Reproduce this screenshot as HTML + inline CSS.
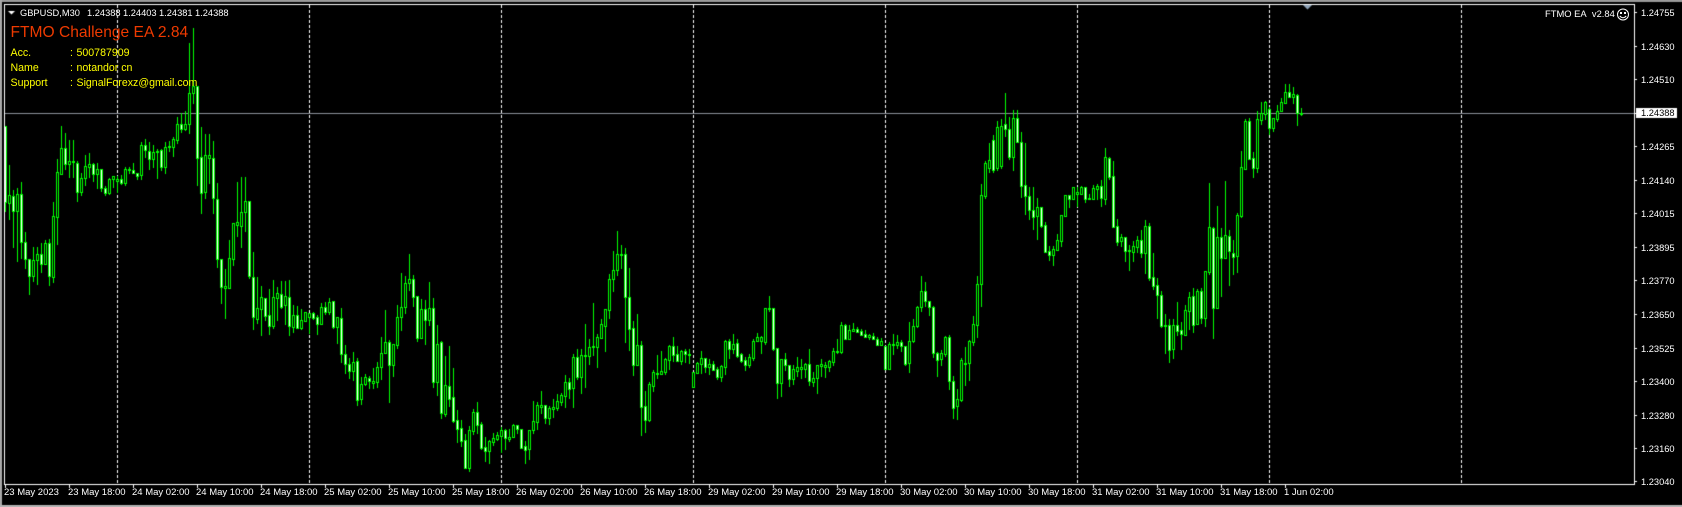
<!DOCTYPE html>
<html><head><meta charset="utf-8"><title>GBPUSD,M30</title>
<style>
html,body{margin:0;padding:0;background:#000;width:1682px;height:507px;overflow:hidden}
#c{position:absolute;left:0;top:0}
.t{position:absolute;white-space:pre;font-family:"Liberation Sans",sans-serif;font-size:9.3px;line-height:12px;height:12px;color:#fff}
.y{color:#ffff00;font-size:10.6px}
.p{left:1641px}
.a{top:487px;font-size:9.5px}
</style></head><body>
<canvas id="c" width="1682" height="507"></canvas>
<div class="t" style="left:20px;top:7px">GBPUSD,M30</div>
<div class="t" style="left:87px;top:7px">1.24388</div>
<div class="t" style="left:123px;top:7px">1.24403</div>
<div class="t" style="left:159px;top:7px">1.24381</div>
<div class="t" style="left:195px;top:7px">1.24388</div>
<div class="t" style="left:10.5px;top:24px;height:18px;line-height:18px;font-size:15.6px;color:#ee3a00">FTMO Challenge EA 2.84</div>
<div class="t y" style="left:10.5px;top:47px">Acc.</div><div class="t y" style="left:70px;top:47px">:</div><div class="t y" style="left:76.5px;top:47px">500787909</div>
<div class="t y" style="left:10.5px;top:62px">Name</div><div class="t y" style="left:70px;top:62px">:</div><div class="t y" style="left:76.5px;top:62px">notandor cn</div>
<div class="t y" style="left:10.5px;top:77px">Support</div><div class="t y" style="left:70px;top:77px">:</div><div class="t y" style="left:76.5px;top:77px">SignalForexz@gmail.com</div>
<div class="t" style="left:1545px;top:8px;font-size:9.4px">FTMO EA&nbsp; v2.84</div>
<svg style="position:absolute;left:1616px;top:8px" width="14" height="14" viewBox="0 0 14 14"><circle cx="7" cy="6.5" r="5.5" fill="none" stroke="#fff" stroke-width="1"/><rect x="4" y="4" width="2" height="2" fill="#fff"/><rect x="8" y="4" width="2" height="2" fill="#fff"/><path d="M3.8 8 Q7 11.5 10.2 8" fill="none" stroke="#fff" stroke-width="1"/></svg>
<div class="t p" style="top:7px">1.24755</div>
<div class="t p" style="top:41px">1.24630</div>
<div class="t p" style="top:74px">1.24510</div>
<div class="t p" style="top:107px;color:#000">1.24388</div>
<div class="t p" style="top:141px">1.24265</div>
<div class="t p" style="top:175px">1.24140</div>
<div class="t p" style="top:208px">1.24015</div>
<div class="t p" style="top:242px">1.23895</div>
<div class="t p" style="top:275px">1.23770</div>
<div class="t p" style="top:309px">1.23650</div>
<div class="t p" style="top:343px">1.23525</div>
<div class="t p" style="top:376px">1.23400</div>
<div class="t p" style="top:410px">1.23280</div>
<div class="t p" style="top:443px">1.23160</div>
<div class="t p" style="top:476px">1.23040</div>
<div class="t a" style="left:4px">23 May 2023</div>
<div class="t a" style="left:68px">23 May 18:00</div>
<div class="t a" style="left:132px">24 May 02:00</div>
<div class="t a" style="left:196px">24 May 10:00</div>
<div class="t a" style="left:260px">24 May 18:00</div>
<div class="t a" style="left:324px">25 May 02:00</div>
<div class="t a" style="left:388px">25 May 10:00</div>
<div class="t a" style="left:452px">25 May 18:00</div>
<div class="t a" style="left:516px">26 May 02:00</div>
<div class="t a" style="left:580px">26 May 10:00</div>
<div class="t a" style="left:644px">26 May 18:00</div>
<div class="t a" style="left:708px">29 May 02:00</div>
<div class="t a" style="left:772px">29 May 10:00</div>
<div class="t a" style="left:836px">29 May 18:00</div>
<div class="t a" style="left:900px">30 May 02:00</div>
<div class="t a" style="left:964px">30 May 10:00</div>
<div class="t a" style="left:1028px">30 May 18:00</div>
<div class="t a" style="left:1092px">31 May 02:00</div>
<div class="t a" style="left:1156px">31 May 10:00</div>
<div class="t a" style="left:1220px">31 May 18:00</div>
<div class="t a" style="left:1284px">1 Jun 02:00</div>
<script>
var D=[[126,126,202,211,1],[165,195,203,219,0],[190,196,211,247,1],[188,194,211,261,0],[182,194,242,258,1],[232,242,259,268,1],[259,259,276,294,1],[247,260,276,281,0],[247,254,260,284,0],[243,254,264,272,1],[240,243,264,264,0],[239,243,276,285,1],[202,216,277,282,0],[159,172,217,244,0],[126,148,174,174,0],[133,148,164,169,1],[140,161,164,177,0],[140,161,162,177,0],[161,163,192,201,1],[173,178,192,195,0],[155,166,178,185,0],[153,164,167,177,0],[163,164,174,181,1],[163,169,174,188,0],[169,169,188,191,1],[186,188,193,195,1],[178,179,193,194,0],[176,176,179,187,0],[176,179,181,192,0],[175,179,183,184,1],[167,169,183,185,0],[167,169,170,173,0],[163,170,173,173,1],[173,173,176,179,1],[142,145,175,179,0],[139,145,150,157,1],[142,151,159,169,1],[145,152,159,167,0],[149,151,152,178,0],[149,150,167,170,1],[142,147,167,173,0],[141,146,147,151,0],[137,139,147,156,0],[117,124,140,143,0],[113,124,129,132,1],[111,124,129,130,0],[43,93,124,133,0],[28,86,93,103,0],[86,86,158,185,1],[127,157,193,213,1],[134,155,192,198,0],[134,155,158,183,0],[141,158,198,213,1],[183,199,259,267,1],[259,259,287,303,1],[269,286,288,318,0],[240,258,288,288,0],[223,223,259,265,0],[182,222,225,236,0],[177,212,226,247,0],[177,201,212,231,0],[201,201,276,278,1],[252,277,317,329,1],[277,308,319,323,0],[286,297,309,335,0],[298,298,316,320,1],[289,315,326,334,1],[280,297,326,328,0],[287,293,298,320,0],[281,294,307,308,1],[281,296,305,324,0],[280,297,326,335,1],[305,315,327,332,0],[306,315,328,328,1],[309,320,328,329,0],[312,312,321,321,0],[313,313,317,333,0],[312,313,318,319,1],[315,317,324,334,1],[303,307,324,324,0],[302,307,312,314,1],[298,302,312,314,0],[301,301,327,328,1],[317,317,327,343,0],[308,318,354,362,1],[345,354,364,373,1],[358,364,371,378,1],[352,362,371,380,0],[358,361,400,405,1],[377,384,399,404,0],[374,377,384,385,0],[376,378,381,388,1],[368,381,383,388,0],[362,367,382,387,0],[337,353,367,379,0],[310,342,353,353,0],[340,342,365,402,1],[344,344,365,376,0],[305,317,345,348,0],[273,307,317,330,0],[276,283,307,313,0],[254,279,283,290,0],[275,279,297,306,1],[296,296,338,341,1],[299,309,338,338,0],[300,309,320,344,1],[282,308,320,325,0],[298,308,382,387,1],[325,344,382,395,0],[341,342,413,418,1],[356,385,414,416,0],[346,386,399,406,1],[368,397,421,422,1],[410,420,429,442,1],[420,428,441,446,1],[434,440,468,468,1],[426,430,468,471,0],[409,412,431,434,0],[402,412,425,433,1],[422,424,448,449,1],[437,447,451,461,1],[440,441,451,463,0],[433,438,442,445,0],[432,435,439,440,0],[427,430,436,452,0],[429,430,438,449,1],[429,437,439,441,0],[424,425,437,437,0],[425,425,429,433,1],[429,429,448,448,1],[441,446,450,463,1],[430,430,449,459,0],[401,421,430,433,0],[402,405,422,429,0],[391,405,407,413,0],[405,405,418,423,1],[406,408,418,424,0],[399,407,409,417,0],[394,401,408,410,0],[393,395,402,405,0],[375,382,396,407,0],[378,382,389,398,1],[354,357,388,407,0],[349,357,377,379,1],[349,355,377,393,0],[324,355,356,387,0],[339,347,356,364,0],[303,346,347,355,0],[334,337,347,367,0],[319,324,338,338,0],[309,309,326,351,0],[274,279,310,318,0],[251,270,279,291,0],[231,254,270,275,0],[245,254,255,268,0],[248,254,297,342,1],[268,297,329,350,1],[321,328,365,375,1],[314,345,365,365,0],[341,345,407,435,1],[391,406,420,432,1],[382,384,420,421,0],[370,372,386,391,0],[355,373,374,378,0],[351,371,374,374,0],[358,359,372,374,0],[345,346,360,369,0],[337,346,355,361,1],[346,354,361,361,1],[350,351,361,364,0],[349,351,354,362,1],[349,354,355,363,0],[372,372,387,387,0],[362,363,373,373,0],[351,358,364,373,0],[358,358,367,372,1],[359,364,367,374,0],[361,364,370,370,1],[367,369,377,379,1],[365,366,377,381,0],[340,341,367,374,0],[339,341,349,358,1],[334,344,349,353,0],[339,343,356,357,1],[353,354,361,362,1],[357,360,365,370,1],[354,357,365,367,0],[339,341,358,360,0],[333,337,341,341,0],[336,337,341,353,0],[308,308,342,344,0],[296,308,309,311,0],[308,308,349,350,1],[348,348,383,398,1],[359,359,383,396,0],[353,359,365,370,1],[365,365,379,386,1],[365,369,379,384,0],[357,367,371,376,0],[359,367,369,378,0],[363,364,369,377,0],[349,364,381,385,1],[372,378,382,386,0],[365,365,378,393,0],[359,364,366,376,0],[362,365,367,377,0],[360,361,367,371,0],[348,351,362,365,0],[339,351,352,353,0],[322,325,352,353,0],[324,325,339,339,1],[325,330,339,339,0],[323,329,331,331,0],[327,329,332,332,1],[329,331,335,335,1],[330,334,337,337,1],[334,335,337,339,0],[333,336,339,339,1],[337,339,345,345,1],[338,341,345,345,0],[346,346,369,369,1],[342,344,369,369,0],[334,344,345,354,0],[335,342,345,348,0],[340,342,346,351,1],[346,346,364,365,1],[322,341,363,372,0],[319,326,341,342,0],[306,307,326,327,0],[276,291,307,311,0],[282,291,301,306,1],[301,301,307,315,1],[306,307,353,357,1],[352,353,360,376,1],[350,353,359,365,0],[336,337,354,356,0],[335,337,381,389,1],[376,381,408,418,1],[389,399,406,419,0],[358,360,400,401,0],[347,363,364,385,0],[340,341,363,380,0],[316,324,342,345,0],[276,284,325,337,0],[184,195,284,306,0],[161,163,196,198,0],[143,160,168,172,0],[135,140,170,172,1],[121,127,168,170,0],[119,126,166,168,0],[93,124,129,136,1],[117,129,157,159,1],[110,118,157,170,0],[110,118,142,142,1],[132,142,186,197,1],[143,185,196,214,1],[187,196,210,219,1],[187,210,217,229,1],[198,207,216,239,0],[207,207,226,227,1],[222,225,252,252,1],[246,251,255,260,1],[246,249,255,265,0],[234,240,250,250,0],[215,215,241,246,0],[195,195,216,216,0],[195,195,199,207,1],[187,187,199,199,0],[187,192,194,206,0],[186,187,194,194,0],[187,187,199,202,1],[194,198,199,199,0],[185,188,199,199,0],[184,186,189,199,0],[180,186,198,206,1],[148,157,199,204,0],[157,158,177,179,1],[161,176,227,227,1],[219,226,242,245,1],[234,237,241,246,0],[237,237,251,261,1],[245,250,251,270,0],[241,246,252,261,0],[236,240,247,252,0],[230,240,253,257,1],[220,226,253,273,0],[223,226,278,280,1],[253,277,286,289,1],[278,285,295,318,1],[291,295,326,327,1],[314,325,326,353,0],[319,325,350,362,1],[319,325,349,358,0],[302,325,331,335,1],[322,330,334,349,1],[305,310,335,335,0],[292,297,311,329,0],[288,296,325,332,1],[289,291,324,324,0],[288,291,318,323,1],[271,271,318,326,0],[183,227,272,274,0],[227,228,308,338,1],[206,237,308,308,0],[228,237,258,296,1],[181,235,258,258,0],[230,236,251,285,1],[240,253,257,274,1],[213,215,256,272,0],[151,167,216,217,0],[119,121,169,169,0],[118,121,159,159,1],[152,158,168,177,1],[111,119,168,172,0],[102,113,120,124,0],[101,102,114,119,0],[107,109,128,134,1],[118,118,128,131,0],[105,111,119,121,0],[98,102,111,111,0],[84,92,103,103,0],[84,92,97,97,1],[87,94,97,103,0],[94,95,113,125,1],[108,113,114,115,0]];
var g=document.getElementById('c').getContext('2d');
function R(c,x,y,w,h){g.fillStyle=c;g.fillRect(x,y,w,h)}
R('#000',0,0,1682,507);
R('#9a9a9a',0,0,1682,2);
R('#a8a8a8',0,0,2,507);
R('#b4b4b4',0,505,1682,2);
// grid
[117,309,501,693,885,1077,1269,1461].forEach(function(x){for(var y=5;y<482;y+=5)R('#fff',x,y,1,3)});
// price line
R('#8a8f98',5,113,1629,1);
// candles
D.forEach(function(d,i){var x=5+4*i,G='#00ff00';
R(G,x,d[0],1,d[3]-d[0]+1);
var h=d[2]-d[1]+1;R(G,x-1,d[1],3,h);
if(h>2)R(d[4]?'#fff':'#000',x,d[1]+1,1,h-2);
});
// frame
R('#fff',4,4,1631,1);R('#fff',4,4,1,481);R('#fff',1634,4,1,481);R('#fff',4,484,1631,1);
// ticks
[12,46,79,113,146,180,213,247,280,314,348,381,415,448,481].forEach(function(y){R('#fff',1635,y,2,1)});
for(var k=0;k<21;k++)R('#fff',5+64*k,485,1,3);
// price tag
R('#fff',1636,108,41,10);
// corner arrows
g.fillStyle='#fff';g.beginPath();g.moveTo(8,11);g.lineTo(15,11);g.lineTo(11.5,14.5);g.closePath();g.fill();
g.fillStyle='#8fa3b8';g.beginPath();g.moveTo(1303,5);g.lineTo(1312,5);g.lineTo(1307.5,9.5);g.closePath();g.fill();
</script>
</body></html>
